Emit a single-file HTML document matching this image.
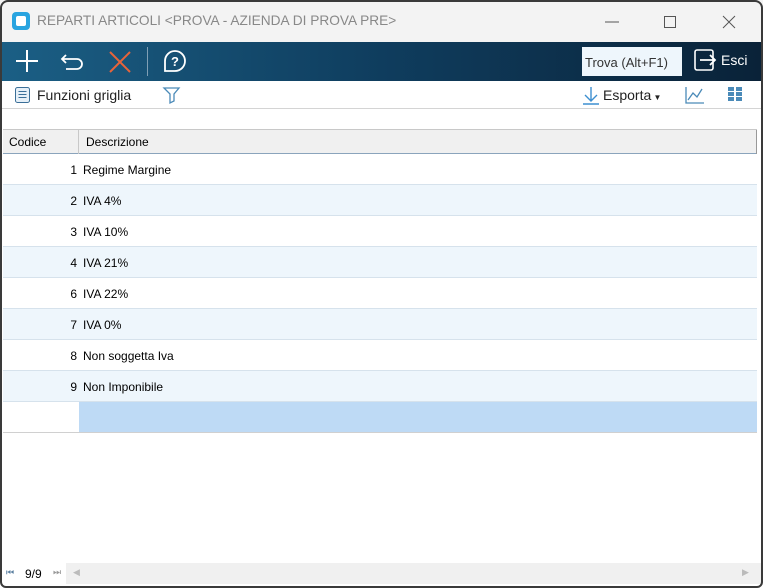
<!DOCTYPE html>
<html><head><meta charset="utf-8"><style>
*{margin:0;padding:0;box-sizing:border-box}
body{width:763px;height:588px;background:#fff;font-family:"Liberation Sans",sans-serif;position:relative;overflow:hidden}
.win{position:absolute;left:0;top:0;width:763px;height:588px;overflow:hidden;background:#fff}
.frame{position:absolute;left:0;top:0;width:763px;height:588px;border:2px solid #3a3a3a;border-radius:8px 8px 6px 6px;z-index:10}
.title{position:absolute;left:0;top:0;width:763px;height:42px;background:#f3f3f3;}
.title .t{position:absolute;left:37px;top:13px;font-size:13.7px;color:#888}
.logo{position:absolute;left:12px;top:12px;width:18px;height:18px;background:#29a4e0;border-radius:4px}
.logo:after{content:"";position:absolute;left:4px;top:4px;width:10px;height:10px;background:#fff;border-radius:2px}
.tb{position:absolute;left:0;top:42px;width:763px;height:39px;background:linear-gradient(90deg,#1b5f85,#0f3d5e 50%,#0a2238)}
.nav{position:absolute;left:0;top:81px;width:763px;height:28px;background:#fff;border-bottom:1px solid #d4d4d4;font-size:14px;color:#222}
.grid{position:absolute;left:3px;top:129px;width:754px}
.hdr{height:25px;background:#f0f0f0;border-top:1px solid #c8c8c8;border-bottom:1px solid #8aa4bc;font-size:12px;position:relative}
.row{height:31px;border-bottom:1px solid #d6e2ec;font-size:12px;position:relative}
.row.a{background:#eef6fc}
.c{position:absolute;right:680px;top:9px}
.d{position:absolute;left:80px;top:9px}
.bot{position:absolute;left:2px;top:563px;width:759px;height:21px;background:#f0f0f0;font-size:12px}
</style></head><body><div class="win">
<div class="title"><div class="logo"></div><div class="t">REPARTI ARTICOLI &lt;PROVA - AZIENDA DI PROVA PRE&gt;</div>
<svg style="position:absolute;left:600px;top:14px" width="150" height="16"><line x1="5" y1="8" x2="19" y2="8" stroke="#555"/><rect x="64.5" y="2.5" width="11" height="11" fill="none" stroke="#555"/><path d="M123 2l12 12M135 2l-12 12" stroke="#555"/></svg></div>
<div class="tb">
<svg width="200" height="39" style="position:absolute;left:0;top:0"><path d="M16 19h22M27 8v22" stroke="#fff" stroke-width="2"/><path d="M66 13l-4 4 4 4M62 17h15a5 5 0 0 1 0 10h-11" stroke="#fff" stroke-width="1.8" fill="none"/><path d="M110 10l20 20M130 10l-20 20" stroke="#e8643a" stroke-width="2"/><line x1="147.5" y1="5" x2="147.5" y2="34" stroke="#7f9fb5"/><path d="M165 29v-10a10 10 0 1 1 10 10z" fill="none" stroke="#fff" stroke-width="1.8"/><text x="175" y="24" fill="#fff" font-size="13" font-weight="bold" text-anchor="middle" font-family="Liberation Sans">?</text></svg>
<div style="position:absolute;left:582px;top:5px;width:100px;height:29px;background:#eef6fc;font-size:13px;color:#333;padding:8px 0 0 3px">Trova (Alt+F1)</div>
<svg width="26" height="26" style="position:absolute;left:693px;top:6px"><rect x="2" y="2" width="18" height="20" rx="2" fill="none" stroke="#fff" stroke-width="1.6"/><path d="M7 12h15M17 7l5 5-5 5" fill="none" stroke="#fff" stroke-width="1.8"/></svg>
<div style="position:absolute;left:721px;top:10px;color:#fff;font-size:14px">Esci</div>
</div>
<div class="nav">
<svg width="18" height="18" style="position:absolute;left:14px;top:5px"><rect x="1.5" y="1.5" width="14" height="15" rx="2" fill="#e6f0f8" stroke="#3b6f98"/><path d="M4.5 5.5h8M4.5 8.5h8M4.5 11.5h8" stroke="#3b6f98"/></svg>
<div style="position:absolute;left:37px;top:6px">Funzioni griglia</div>
<svg width="20" height="20" style="position:absolute;left:162px;top:4px"><path d="M2 3h15l-5 6v7l-4 2v-9z" fill="none" stroke="#4a8ab8" stroke-width="1.3"/></svg>
<svg width="20" height="20" style="position:absolute;left:581px;top:5px"><path d="M10 1v13M4 9l6 6 6-6M2 18h16" fill="none" stroke="#3d8fd0" stroke-width="1.4"/></svg>
<div style="position:absolute;left:603px;top:6px">Esporta<span style="font-size:8px"> ▼</span></div>
<svg width="22" height="20" style="position:absolute;left:684px;top:4px"><path d="M2 2v16h18M4 15l5-7 4 4 5-8" fill="none" stroke="#4a8ab8" stroke-width="1.3"/></svg>
<svg width="16" height="16" style="position:absolute;left:728px;top:6px"><g fill="#4a8ab8"><rect x="0" y="0" width="6" height="4"/><rect x="8" y="0" width="6" height="4"/><rect x="0" y="5" width="6" height="4"/><rect x="8" y="5" width="6" height="4"/><rect x="0" y="10" width="6" height="4"/><rect x="8" y="10" width="6" height="4"/></g></svg>
</div>
<div class="grid">
<div class="hdr"><span style="position:absolute;left:6px;top:5px">Codice</span><div style="position:absolute;left:75px;top:0;height:24px;border-left:1px solid #c8c8c8"></div><span style="position:absolute;left:83px;top:5px">Descrizione</span><div style="position:absolute;right:0;top:0;height:24px;border-left:1px solid #999"></div></div>
<div class="row"><span class="c">1</span><span class="d">Regime Margine</span></div>
<div class="row a"><span class="c">2</span><span class="d">IVA 4%</span></div>
<div class="row"><span class="c">3</span><span class="d">IVA 10%</span></div>
<div class="row a"><span class="c">4</span><span class="d">IVA 21%</span></div>
<div class="row"><span class="c">6</span><span class="d">IVA 22%</span></div>
<div class="row a"><span class="c">7</span><span class="d">IVA 0%</span></div>
<div class="row"><span class="c">8</span><span class="d">Non soggetta Iva</span></div>
<div class="row a"><span class="c">9</span><span class="d">Non Imponibile</span></div>
<div class="row" style="border-bottom:1px solid #d0d0d0"><div style="position:absolute;left:76px;top:0;right:0;height:30px;background:#bedaf5"></div></div>
</div>
<div class="bot"><div style="position:absolute;left:0;top:0;width:64px;height:21px;background:#fff"></div>
<span style="position:absolute;left:4px;top:4px;font-size:9px;color:#5a7fa0">⏮</span>
<span style="position:absolute;left:23px;top:4px">9/9</span>
<span style="position:absolute;left:51px;top:4px;font-size:9px;color:#999">⏭</span>
<span style="position:absolute;left:71px;top:4px;font-size:9px;color:#bbb">◀</span>
<span style="position:absolute;left:740px;top:4px;font-size:9px;color:#bbb">▶</span></div>
</div><div class="frame"></div></body></html>
